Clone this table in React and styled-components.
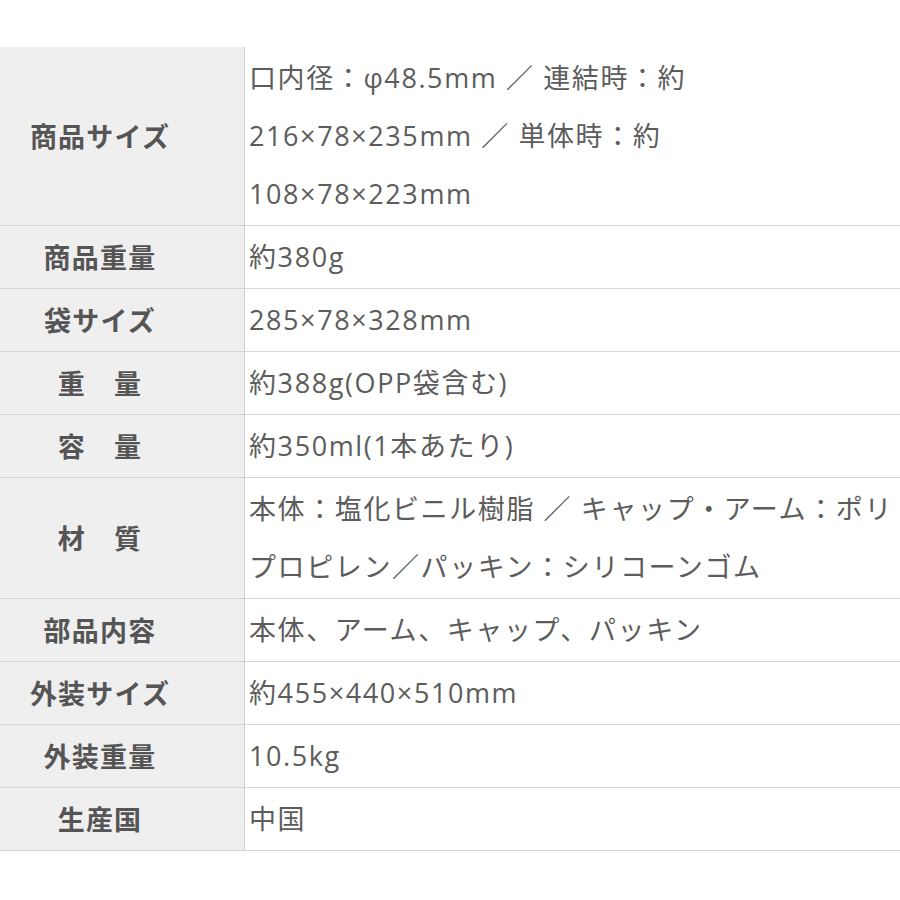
import React from "react";
import styled, { createGlobalStyle } from "styled-components";

const Global = createGlobalStyle`
  html, body { margin: 0; padding: 0; background: #fff; overflow: hidden; }
  body { font-family: "Open Sans", "Noto Sans CJK JP", sans-serif; }
`;

const Table = styled.table`
  margin-top: 47px;
  width: 900px;
  border-collapse: collapse;
  table-layout: fixed;
  color: #5c5c5c;
`;

const Row = styled.tr`
  border-bottom: 1px solid #d4d4d4;
`;

const Head = styled.th`
  width: 200px;
  padding: 2px 44px 2px 0;
  background: #efefef;
  border-right: 1px solid #d0d0d0;
  font-family: "Noto Sans CJK JP", sans-serif;
  font-weight: 700;
  font-size: 27px;
  letter-spacing: 1.2px;
  line-height: 58px;
  text-align: center;
  vertical-align: middle;
  color: #555;
`;

const Cell = styled.td`
  padding: 2px 0 2px 4px;
  font-size: 27px;
  letter-spacing: 1.6px;
  line-height: 58px;
  text-align: left;
  vertical-align: middle;
  white-space: nowrap;
  overflow: hidden;
`;

const rows = [
  ["商品サイズ", ["口内径：φ48.5mm ／ 連結時：約", "216×78×235mm ／ 単体時：約", "108×78×223mm"]],
  ["商品重量", ["約380g"]],
  ["袋サイズ", ["285×78×328mm"]],
  ["重　量", ["約388g(OPP袋含む)"]],
  ["容　量", ["約350ml(1本あたり)"]],
  ["材　質", ["本体：塩化ビニル樹脂 ／ キャップ・アーム：ポリ", "プロピレン／パッキン：シリコーンゴム"]],
  ["部品内容", ["本体、アーム、キャップ、パッキン"]],
  ["外装サイズ", ["約455×440×510mm"]],
  ["外装重量", ["10.5kg"]],
  ["生産国", ["中国"]],
];

export default function App() {
  return (
    <>
      <Global />
      <Table>
        <tbody>
          {rows.map(([label, lines]) => (
            <Row key={label}>
              <Head>{label}</Head>
              <Cell>
                {lines.map((l, i) => (
                  <React.Fragment key={i}>
                    {i > 0 && <br />}
                    {l}
                  </React.Fragment>
                ))}
              </Cell>
            </Row>
          ))}
        </tbody>
      </Table>
    </>
  );
}
